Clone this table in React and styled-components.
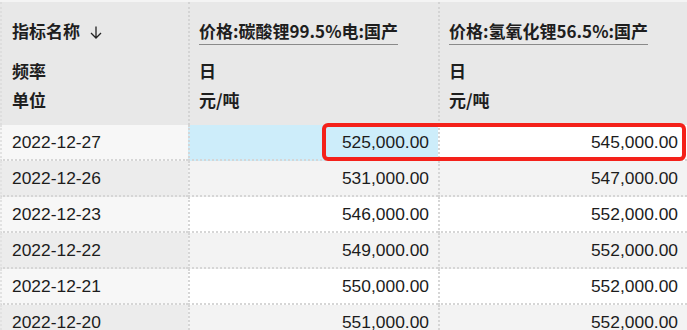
import React from "react";
import styled, { createGlobalStyle } from "styled-components";

const Global = createGlobalStyle`
  html, body { margin: 0; padding: 0; background: #ffffff; }
  body { font-family: "Liberation Sans", Arial, "Noto Sans CJK SC", sans-serif; }
`;

const Wrap = styled.div`
  position: relative;
  width: 687px;
  border-top: 2px solid #f4f4f4;
`;

const Grid = styled.div`
  display: grid;
  grid-template-columns: 188px 250px 249px;
`;

const HeadCell = styled.div`
  background: #e8e8e8;
  height: 123px;
  box-sizing: border-box;
  padding: 16px 0 0 ${(p) => (p.$first ? 10 : 9)}px;
  border-left: 2px dotted ${(p) => (p.$first ? "#dedede" : "#d4d4d4")};
  font-family: "Noto Sans CJK SC", "Liberation Sans", sans-serif;
  font-weight: 700;
  font-size: 17px;
  color: #1e1e1e;
  display: flex;
  flex-direction: column;
`;

const Title = styled.div`
  height: 38px;
  line-height: 25px;
  display: flex;
  align-items: flex-start;
`;

const Underlined = styled.span`
  display: inline-block;
  border-bottom: 1px solid #8a8a8a;
  line-height: 25px;
  padding-bottom: 1px;
`;

const ArrowIcon = styled.svg`
  margin: 8px 0 0 10px;
  flex: none;
`;

const Meta = styled.div`
  height: 29px;
  line-height: 29px;
`;

const Cell = styled.div`
  height: 36px;
  box-sizing: border-box;
  border-bottom: 2px dotted #d6d6d6;
  border-left: 2px dotted ${(p) => (p.$first ? "#e2e2e2" : "#d6d6d6")};
  background: ${(p) => p.$bg};
  font-size: 17.4px;
  color: #1c1c1c;
  line-height: 34px;
  text-align: ${(p) => (p.$first ? "left" : "right")};
  padding: ${(p) => (p.$first ? "0 0 0 10px" : "0 9px 0 0")};
`;

const Highlight = styled.div`
  position: absolute;
  left: 322px;
  top: 121px;
  width: 364px;
  height: 38px;
  box-sizing: border-box;
  border: 4px solid #f4211a;
  border-radius: 6px;
  pointer-events: none;
`;

const rows = [
  ["2022-12-27", "525,000.00", "545,000.00"],
  ["2022-12-26", "531,000.00", "547,000.00"],
  ["2022-12-23", "546,000.00", "552,000.00"],
  ["2022-12-22", "549,000.00", "552,000.00"],
  ["2022-12-21", "550,000.00", "552,000.00"],
  ["2022-12-20", "551,000.00", "552,000.00"],
];

export default function App() {
  return (
    <>
      <Global />
      <Wrap>
        <Grid>
          <HeadCell $first>
            <Title>
              指标名称
              <ArrowIcon width="12" height="13" viewBox="0 0 12 13">
                <path
                  d="M6 0.5V12M1 7L6 12L11 7"
                  fill="none"
                  stroke="#222"
                  strokeWidth="1.3"
                />
              </ArrowIcon>
            </Title>
            <Meta>频率</Meta>
            <Meta>单位</Meta>
          </HeadCell>
          <HeadCell>
            <Title>
              <Underlined>价格:碳酸锂99.5%电:国产</Underlined>
            </Title>
            <Meta>日</Meta>
            <Meta>元/吨</Meta>
          </HeadCell>
          <HeadCell>
            <Title>
              <Underlined>价格:氢氧化锂56.5%:国产</Underlined>
            </Title>
            <Meta>日</Meta>
            <Meta>元/吨</Meta>
          </HeadCell>
          {rows.map((r, i) => {
            const odd = i % 2 === 1;
            const firstBg = odd ? "#ececec" : "#f7f7f7";
            const dataBg = odd ? "#f3f3f3" : "#ffffff";
            return (
              <React.Fragment key={r[0]}>
                <Cell $first $bg={firstBg}>{r[0]}</Cell>
                <Cell $bg={i === 0 ? "#cdedfa" : dataBg}>{r[1]}</Cell>
                <Cell $bg={dataBg}>{r[2]}</Cell>
              </React.Fragment>
            );
          })}
        </Grid>
        <Highlight />
      </Wrap>
    </>
  );
}
